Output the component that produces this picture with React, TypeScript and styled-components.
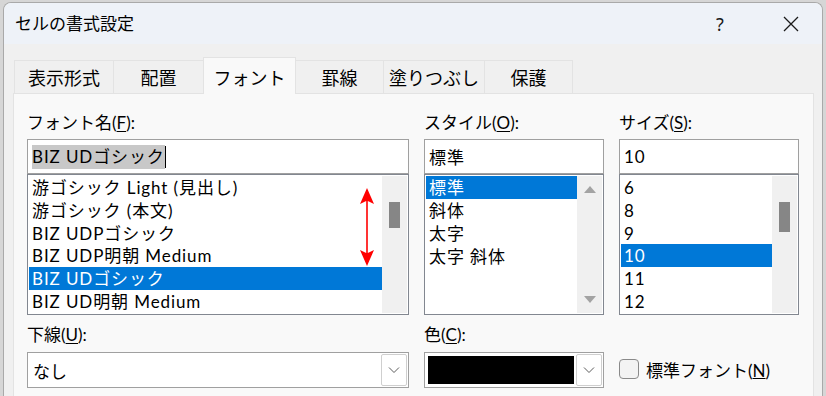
import React from 'react';
import styled, { createGlobalStyle } from 'styled-components';

const GlobalStyle = createGlobalStyle`
  html, body {
    margin: 0;
    padding: 0;
    overflow: hidden;
  }
  body {
    font-family: Lato, "Noto Sans CJK JP", sans-serif;
    color: #000;
  }
`;

const Page = styled.div`
  width: 826px;
  height: 396px;
  box-sizing: border-box;
  padding: 2px 0 0 3px;
  background: #d6d6d6;
  display: flex;
`;

const Window = styled.div`
  width: 820px;
  box-sizing: border-box;
  border: 1px solid #a9a9a9;
  border-bottom: none;
  border-radius: 8px 8px 0 0;
  overflow: hidden;
  background: #f0f0f0;
  display: flex;
  flex-direction: column;
`;

const TitleBar = styled.div`
  height: 41px;
  background: #eef2f8;
  display: flex;
  align-items: center;
  padding-left: 11px;
`;

const Title = styled.div`
  flex: 1;
  font-size: 17px;
  line-height: 20px;
`;

const TitleButton = styled.div<{ $mr?: number }>`
  width: 46px;
  height: 41px;
  display: flex;
  align-items: center;
  justify-content: center;
  margin-right: ${(p) => p.$mr ?? 0}px;
  font-family: "Noto Sans", sans-serif;
  font-size: 18px;
  color: #1a1a1a;
`;

const Body = styled.div`
  flex: 1;
  padding: 13px 8px 0 9px;
  display: flex;
  flex-direction: column;
`;

const TabRow = styled.div`
  display: flex;
  align-items: flex-end;
  padding-left: 1px;
  position: relative;
  z-index: 1;
`;

const Tab = styled.div<{ $w: number; $active?: boolean }>`
  width: ${(p) => p.$w}px;
  height: ${(p) => (p.$active ? 37 : 33)}px;
  box-sizing: border-box;
  border: 1px solid #e3e3e3;
  border-bottom: none;
  margin-left: -1px;
  margin-bottom: ${(p) => (p.$active ? -1 : 0)}px;
  background: ${(p) => (p.$active ? '#f9f9f9' : '#f0f0f0')};
  display: flex;
  align-items: center;
  justify-content: center;
  font-size: 18px;
  padding-top: ${(p) => (p.$active ? 1 : 0)}px;
  &:first-child {
    margin-left: 0;
  }
`;

const Panel = styled.div`
  flex: 1;
  box-sizing: border-box;
  border: 1px solid #e3e3e3;
  border-bottom: none;
  background: #f9f9f9;
  padding: 19px 0 0 13px;
`;

const Grid = styled.div`
  display: grid;
  grid-template-columns: 382px 180px 180px;
  column-gap: 15px;
`;

const Field = styled.div<{ $top?: number }>`
  display: flex;
  flex-direction: column;
  margin-top: ${(p) => p.$top ?? 0}px;
`;

const Label = styled.div<{ $gap?: number }>`
  font-size: 17px;
  line-height: 20px;
  margin-bottom: ${(p) => p.$gap ?? 6}px;
  white-space: nowrap;
  u {
    text-decoration-thickness: 1px;
    text-underline-offset: 2px;
  }
`;

const TextBox = styled.div`
  height: 35px;
  box-sizing: border-box;
  border: 1px solid #a0a0a0;
  background: #fff;
  display: flex;
  align-items: center;
  padding-left: 4px;
  font-size: 17px;
  letter-spacing: 0.9px;
`;

const Highlight = styled.span`
  background: #c8c8c8;
  line-height: 24px;
`;

const Caret = styled.span`
  display: inline-block;
  width: 1px;
  height: 22px;
  background: #000;
`;

const ListBox = styled.div`
  position: relative;
  height: 141px;
  box-sizing: border-box;
  border: 1px solid #828790;
  background: #fff;
  padding: 1px;
  display: flex;
`;

const Items = styled.div`
  flex: 1;
  display: flex;
  flex-direction: column;
`;

const Item = styled.div<{ $selected?: boolean }>`
  height: 23px;
  line-height: 23px;
  padding-left: 3px;
  font-size: 17px;
  letter-spacing: 0.9px;
  white-space: nowrap;
  overflow: hidden;
  background: ${(p) => (p.$selected ? '#0078d7' : 'transparent')};
  color: ${(p) => (p.$selected ? '#fff' : '#000')};
`;

const ScrollTrack = styled.div`
  position: relative;
  width: 25px;
  background: #f0f0f0;
  display: flex;
  flex-direction: column;
  justify-content: space-between;
  align-items: center;
  padding: 10px 0;
  box-sizing: border-box;
`;

const Thumb = styled.div`
  position: absolute;
  left: 7px;
  width: 11px;
  background: #868686;
`;

const Tri = styled.div<{ $down?: boolean }>`
  width: 0;
  height: 0;
  border-left: 6px solid transparent;
  border-right: 6px solid transparent;
  ${(p) =>
    p.$down ? 'border-top: 7px solid #a3a3a3;' : 'border-bottom: 7px solid #a3a3a3;'}
`;

const ArrowMark = styled.svg`
  position: absolute;
  left: 331px;
  top: 13px;
`;

const Combo = styled.div`
  height: 36px;
  box-sizing: border-box;
  border: 1px solid #a0a0a0;
  background: #fff;
  display: flex;
  align-items: stretch;
  padding: 1px;
`;

const ComboText = styled.div`
  flex: 1;
  display: flex;
  align-items: center;
  padding-left: 4px;
  font-size: 17px;
`;

const Swatch = styled.div`
  flex: 1;
  background: #000;
  margin: 2px;
`;

const DropButton = styled.div`
  width: 26px;
  box-sizing: border-box;
  border: 1px solid #cfcfcf;
  border-radius: 2px;
  display: flex;
  align-items: center;
  justify-content: center;
`;

const CheckRow = styled.label`
  align-self: end;
  height: 36px;
  display: flex;
  align-items: center;
  gap: 7px;
  font-size: 17px;
  padding-bottom: 1px;
  white-space: nowrap;
`;

const CheckBox = styled.span`
  width: 20px;
  height: 20px;
  box-sizing: border-box;
  border: 1px solid #8a8a8a;
  border-radius: 4px;
  background: #f3f3f3;
`;

const Chevron = () => (
  <svg width="12" height="8" viewBox="0 0 12 8">
    <path d="M1 1.5 L6 6.5 L11 1.5" fill="none" stroke="#5c5c5c" strokeWidth="1" />
  </svg>
);

type ListProps = {
  items: string[];
  selected: number;
  thumb?: { top: number; height: number };
  arrows?: boolean;
  children?: React.ReactNode;
};

const List: React.FC<ListProps> = ({ items, selected, thumb, arrows, children }) => (
  <ListBox>
    <Items>
      {items.map((it, i) => (
        <Item key={it} $selected={i === selected}>
          {it}
        </Item>
      ))}
    </Items>
    <ScrollTrack>
      {thumb && <Thumb style={{ top: thumb.top, height: thumb.height }} />}
      {arrows && (
        <>
          <Tri />
          <Tri $down />
        </>
      )}
    </ScrollTrack>
    {children}
  </ListBox>
);

const tabs = [
  { label: '表示形式', w: 100 },
  { label: '配置', w: 91 },
  { label: 'フォント', w: 93, active: true },
  { label: '罫線', w: 89 },
  { label: '塗りつぶし', w: 102 },
  { label: '保護', w: 89 },
];

const fonts = [
  '游ゴシック Light (見出し)',
  '游ゴシック (本文)',
  'BIZ UDPゴシック',
  'BIZ UDP明朝 Medium',
  'BIZ UDゴシック',
  'BIZ UD明朝 Medium',
];

const App: React.FC = () => (
  <>
    <GlobalStyle />
    <Page>
      <Window>
        <TitleBar>
          <Title>セルの書式設定</Title>
          <TitleButton $mr={25}>?</TitleButton>
          <TitleButton $mr={8}>
            <svg width="16" height="16" viewBox="0 0 16 16">
              <path d="M1 1 L15 15 M15 1 L1 15" stroke="#1a1a1a" strokeWidth="1.3" />
            </svg>
          </TitleButton>
        </TitleBar>
        <Body>
          <TabRow>
            {tabs.map((t) => (
              <Tab key={t.label} $w={t.w} $active={t.active}>
                {t.label}
              </Tab>
            ))}
          </TabRow>
          <Panel>
            <Grid>
              <Field>
                <Label>
                  フォント名(<u>F</u>):
                </Label>
                <TextBox>
                  <Highlight>BIZ UDゴシック</Highlight>
                  <Caret />
                </TextBox>
                <List items={fonts} selected={4} thumb={{ top: 26, height: 26 }}>
                  <ArrowMark width="16" height="78" viewBox="0 0 16 78">
                    <path d="M8 0 L15 16 L8.8 13 L8.8 65 L15 62 L8 78 L1 62 L7.2 65 L7.2 13 L1 16 Z" fill="#ff0000" />
                  </ArrowMark>
                </List>
              </Field>
              <Field>
                <Label>
                  スタイル(<u>O</u>):
                </Label>
                <TextBox>標準</TextBox>
                <List items={['標準', '斜体', '太字', '太字 斜体']} selected={0} arrows />
              </Field>
              <Field>
                <Label>
                  サイズ(<u>S</u>):
                </Label>
                <TextBox>10</TextBox>
                <List
                  items={['6', '8', '9', '10', '11', '12']}
                  selected={3}
                  thumb={{ top: 26, height: 30 }}
                />
              </Field>
              <Field $top={10}>
                <Label $gap={7}>
                  下線(<u>U</u>):
                </Label>
                <Combo>
                  <ComboText>なし</ComboText>
                  <DropButton>
                    <Chevron />
                  </DropButton>
                </Combo>
              </Field>
              <Field $top={10}>
                <Label $gap={7}>
                  色(<u>C</u>):
                </Label>
                <Combo>
                  <Swatch />
                  <DropButton>
                    <Chevron />
                  </DropButton>
                </Combo>
              </Field>
              <CheckRow>
                <CheckBox />
                <span>
                  標準フォント(<u>N</u>)
                </span>
              </CheckRow>
            </Grid>
          </Panel>
        </Body>
      </Window>
    </Page>
  </>
);

export default App;
